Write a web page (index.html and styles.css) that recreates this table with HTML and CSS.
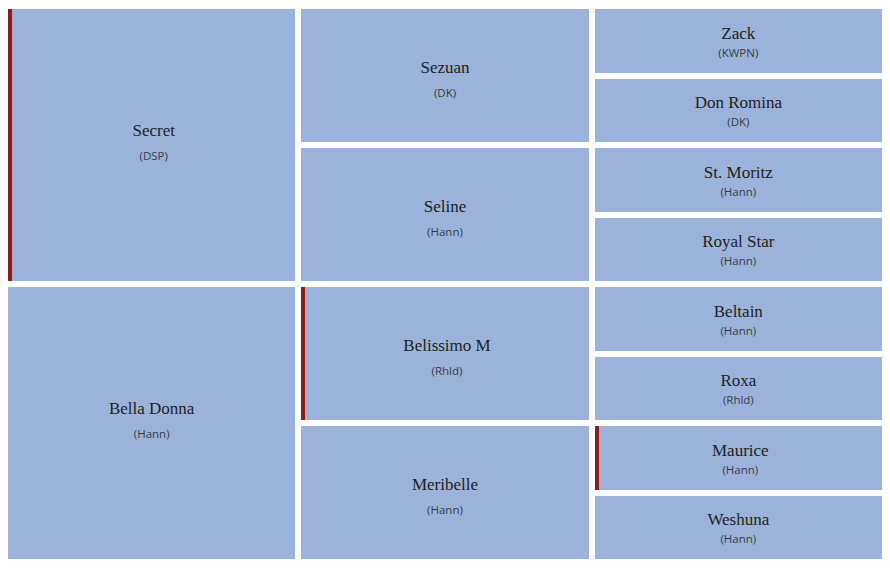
FILE: index.html
```html
<!DOCTYPE html>
<html lang="de">
<head>
<meta charset="utf-8">
<title>Pedigree</title>
<link rel="stylesheet" href="styles.css">
</head>
<body>
<div class="pedigree">
  <div class="gen gen-1">
    <div class="horse mark"><div class="name">Secret</div><div class="breed">(DSP)</div></div>
    <div class="horse"><div class="name">Bella Donna</div><div class="breed">(Hann)</div></div>
  </div>
  <div class="gen gen-2">
    <div class="horse"><div class="name">Sezuan</div><div class="breed">(DK)</div></div>
    <div class="horse"><div class="name">Seline</div><div class="breed">(Hann)</div></div>
    <div class="horse mark"><div class="name">Belissimo M</div><div class="breed">(Rhld)</div></div>
    <div class="horse"><div class="name">Meribelle</div><div class="breed">(Hann)</div></div>
  </div>
  <div class="gen gen-3">
    <div class="horse"><div class="name">Zack</div><div class="breed">(KWPN)</div></div>
    <div class="horse"><div class="name">Don Romina</div><div class="breed">(DK)</div></div>
    <div class="horse"><div class="name">St. Moritz</div><div class="breed">(Hann)</div></div>
    <div class="horse"><div class="name">Royal Star</div><div class="breed">(Hann)</div></div>
    <div class="horse"><div class="name">Beltain</div><div class="breed">(Hann)</div></div>
    <div class="horse"><div class="name">Roxa</div><div class="breed">(Rhld)</div></div>
    <div class="horse mark"><div class="name">Maurice</div><div class="breed">(Hann)</div></div>
    <div class="horse"><div class="name">Weshuna</div><div class="breed">(Hann)</div></div>
  </div>
</div>
</body>
</html>
```

FILE: styles.css
```css
html, body {
  margin: 0;
  padding: 0;
  background: #ffffff;
}

.pedigree {
  margin: 9px 8px 0 8px;
  height: 550px;
  display: grid;
  grid-template-columns: 1fr 1fr 1fr;
  column-gap: 6px;
}

.gen {
  display: flex;
  flex-direction: column;
  gap: 6px;
  min-height: 0;
}

.horse {
  flex: 1 1 0;
  min-height: 0;
  background: #9bb3da;
  display: flex;
  flex-direction: column;
  align-items: center;
  justify-content: center;
  text-align: center;
  box-sizing: border-box;
}

.horse.mark {
  border-left: 4px solid #8e1b1e;
}

.name {
  font-family: "Liberation Serif", "DejaVu Serif", serif;
  font-size: 17px;
  line-height: 20px;
  color: #222222;
}

.breed {
  font-family: "Open Sans", "Noto Sans", sans-serif;
  font-size: 11.5px;
  line-height: 14px;
  color: #3a3d46;
  margin-top: 8px;
}

.gen-1 .horse {
  padding-bottom: 6px;
}

.gen-2 .horse {
  padding-top: 7px;
}

.gen-3 .horse {
  padding-top: 2px;
}

.gen-3 .breed {
  margin-top: 2px;
}
```
